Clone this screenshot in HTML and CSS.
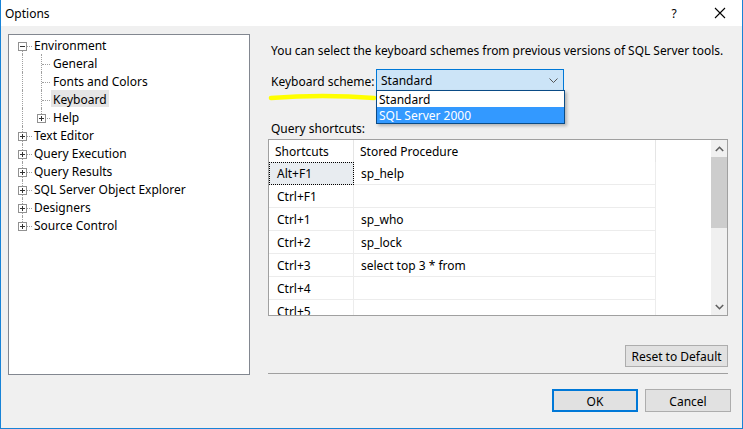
FILE: index.html
```html
<!DOCTYPE html>
<html>
<head>
<meta charset="utf-8">
<title>Options</title>
<link rel="stylesheet" href="styles.css">
</head>
<body>
<div class="window">
  <div class="titlebar">
    <span class="title">Options</span>
    <span class="tb-help">?</span>
    <span class="tb-close"><svg width="12" height="12" viewBox="0 0 12 12"><path d="M1 1 L11 11 M11 1 L1 11" stroke="#000" stroke-width="1.1" fill="none"/></svg></span>
  </div>
  <div class="main">
    <div class="tree">
      <div class="node first-top"><i class="v"></i><i class="h"></i><i class="exp minus"></i><span class="lbl">Environment</span></div>
      <div class="node child"><i class="v"></i><i class="cv"></i><i class="ch"></i><span class="lbl">General</span></div>
      <div class="node child"><i class="v"></i><i class="cv"></i><i class="ch"></i><span class="lbl">Fonts and Colors</span></div>
      <div class="node child"><i class="v"></i><i class="cv"></i><i class="ch"></i><span class="lbl selected">Keyboard</span></div>
      <div class="node child last-child"><i class="v"></i><i class="cv"></i><i class="ch short"></i><i class="exp plus cexp"></i><span class="lbl">Help</span></div>
      <div class="node"><i class="v"></i><i class="h"></i><i class="exp plus"></i><span class="lbl">Text Editor</span></div>
      <div class="node"><i class="v"></i><i class="h"></i><i class="exp plus"></i><span class="lbl">Query Execution</span></div>
      <div class="node"><i class="v"></i><i class="h"></i><i class="exp plus"></i><span class="lbl">Query Results</span></div>
      <div class="node"><i class="v"></i><i class="h"></i><i class="exp plus"></i><span class="lbl">SQL Server Object Explorer</span></div>
      <div class="node"><i class="v"></i><i class="h"></i><i class="exp plus"></i><span class="lbl">Designers</span></div>
      <div class="node last-top"><i class="v"></i><i class="h"></i><i class="exp plus"></i><span class="lbl">Source Control</span></div>
    </div>
    <div class="panel">
      <p class="intro">You can select the keyboard schemes from previous versions of SQL Server tools.</p>
      <div class="scheme-row">
        <span class="scheme-label">Keyboard scheme:</span>
        <div class="combo">
          <span>Standard</span>
          <svg class="chev" width="9" height="5" viewBox="0 0 9 5"><path d="M0.5 0.5 L4.5 4.5 L8.5 0.5" stroke="#555" fill="none"/></svg>
          <div class="dropdown">
            <div class="opt">Standard</div>
            <div class="opt active">SQL Server 2000</div>
          </div>
        </div>
        <svg class="marker" width="110" height="10" viewBox="0 0 110 10"><path d="M3 6 Q 55 2 106 6" stroke="#ffff00" stroke-width="4.5" stroke-linecap="round" fill="none"/></svg>
      </div>
      <p class="qs-label">Query shortcuts:</p>
      <div class="grid">
        <div class="table">
          <div class="hdr c1">Shortcuts</div><div class="hdr c2">Stored Procedure</div>
          <div class="cell c1 focus">Alt+F1</div><div class="cell c2">sp_help</div>
          <div class="cell c1">Ctrl+F1</div><div class="cell c2"></div>
          <div class="cell c1">Ctrl+1</div><div class="cell c2">sp_who</div>
          <div class="cell c1">Ctrl+2</div><div class="cell c2">sp_lock</div>
          <div class="cell c1">Ctrl+3</div><div class="cell c2">select top 3 * from</div>
          <div class="cell c1">Ctrl+4</div><div class="cell c2"></div>
          <div class="cell c1">Ctrl+5</div><div class="cell c2"></div>
        </div>
        <div class="scrollbar">
          <div class="arrow"><svg width="9" height="6" viewBox="0 0 9 6"><path d="M0.8 5 L4.5 1.3 L8.2 5" stroke="#606060" stroke-width="1.6" fill="none"/></svg></div>
          <div class="thumb"></div>
          <div class="track"></div>
          <div class="arrow"><svg width="9" height="6" viewBox="0 0 9 6"><path d="M0.8 1 L4.5 4.7 L8.2 1" stroke="#606060" stroke-width="1.6" fill="none"/></svg></div>
        </div>
      </div>
      <div class="reset-row"><button class="btn reset">Reset to Default</button></div>
      <div class="sep"></div>
    </div>
  </div>
  <div class="footer">
    <button class="btn ok">OK</button>
    <button class="btn cancel">Cancel</button>
  </div>
</div>
</body>
</html>
```

FILE: styles.css
```css
* { box-sizing: border-box; }
html, body { margin: 0; padding: 0; }
body {
  width: 743px;
  height: 429px;
  overflow: hidden;
  font-family: "Noto Sans", "Open Sans", sans-serif;
  font-size: 12px;
  color: #000;
  background: #f0f0f0;
}
.window {
  width: 743px;
  height: 429px;
  border: 1px solid #1883d7;
  border-top: none;
  background: #f0f0f0;
  display: flex;
  flex-direction: column;
}
.titlebar {
  height: 26px;
  background: #fff;
  display: flex;
  align-items: center;
  padding-left: 4px;
  flex-shrink: 0;
}
.title { flex: 1; font-size: 12px; }
.tb-help { width: 20px; text-align: center; margin-right: 30px; font-size: 12px; }
.tb-close { width: 12px; height: 12px; margin-right: 16px; display: flex; }

.main {
  display: flex;
  padding: 8px 14px 0 7px;
  gap: 18px;
}
.tree {
  width: 242px;
  height: 341px;
  border: 1px solid #828790;
  background: #fff;
  padding-top: 1px;
  flex-shrink: 0;
}
.node {
  position: relative;
  height: 18px;
  line-height: 18px;
  padding-left: 23px;
  white-space: nowrap;
}
.node.child { padding-left: 42px; }
.lbl { display: inline-block; padding: 1px 2px 0; height: 17px; line-height: 17px; vertical-align: top; }
.lbl.selected { background: #e5e5e5; }
.node i { position: absolute; display: block; }
.v { left: 13px; top: 0; bottom: 0; border-left: 1px dotted #a0a0a0; }
.first-top .v { top: 15px; }
.last-top .v { bottom: auto; height: 6px; }
.h { left: 18px; top: 10px; width: 5px; border-top: 1px dotted #a0a0a0; }
.cv { left: 32px; top: 0; bottom: 0; border-left: 1px dotted #a0a0a0; }
.last-child .cv { bottom: auto; height: 6px; }
.ch { left: 33px; top: 10px; width: 8px; border-top: 1px dotted #a0a0a0; }
.exp {
  left: 9px; top: 6px;
  width: 9px; height: 9px;
  border: 1px solid #919191;
  background: #fff;
}
.exp.cexp { left: 28px; }
.exp::before {
  content: "";
  position: absolute;
  left: 1px; top: 3px;
  width: 5px; height: 1px;
  background: #333;
}
.exp.plus::after {
  content: "";
  position: absolute;
  left: 3px; top: 1px;
  width: 1px; height: 5px;
  background: #333;
}

.panel {
  width: 460px;
  display: flex;
  flex-direction: column;
}
.intro { margin: 9px 0 0 3px; height: 16px; line-height: 16px; white-space: nowrap; font-size: 11.95px; }
.scheme-row {
  position: relative;
  display: flex;
  align-items: center;
  margin-top: 10px;
  height: 22px;
}
.scheme-label { width: 108px; padding: 2px 0 0 3px; }
.combo {
  position: relative;
  width: 188px;
  height: 22px;
  border: 1px solid #0078d7;
  background: #cce4f7;
  display: flex;
  align-items: center;
  padding: 1px 0 0 4px;
}
.combo span { flex: 1; }
.chev { margin: 0 5px 1px 0; }
.dropdown {
  position: absolute;
  left: -1px; top: 20px;
  width: 189px;
  border: 1px solid #0a4b86;
  background: #fff;
  box-shadow: 2px 2px 3px rgba(0,0,0,0.25);
  z-index: 2;
}
.opt { height: 16px; line-height: 17px; padding-left: 2px; }
.opt.active { background: #3399ff; color: #fff; }
.marker { position: absolute; left: 0; top: 23px; }
.qs-label { margin: 30px 0 0 3px; height: 16px; line-height: 16px; }
.grid {
  margin-top: 2px;
  height: 177px;
  border: 1px solid #a0a0a0;
  background: #fff;
  display: flex;
}
.table {
  flex: 1;
  display: grid;
  grid-template-columns: 85px 302px;
  grid-auto-rows: 23px;
  grid-template-rows: 22px;
  overflow: hidden;
  align-content: start;
}
.hdr {
  padding: 1px 0 0 6px;
  line-height: 21px;
  border-right: 1px solid #e5e5e5;
}
.cell {
  padding-top: 1px;
  line-height: 21px;
  border-bottom: 1px solid #ececec;
  border-right: 1px solid #ececec;
}
.cell.c1 { padding-left: 8px; }
.cell.c2 { padding-left: 7px; }
.cell.focus { background: #e8ecf0; outline: 1px dotted #000; outline-offset: -1px; }
.scrollbar {
  width: 16px;
  background: #f0f0f0;
  display: flex;
  flex-direction: column;
}
.arrow { height: 17px; display: flex; align-items: center; justify-content: center; }
.thumb { height: 71px; background: #cdcdcd; }
.track { flex: 1; }
.reset-row { display: flex; justify-content: flex-end; margin-top: 29px; }
.btn {
  font-family: inherit;
  font-size: 12px;
  color: #000;
  background: #e1e1e1;
  border: 1px solid #adadad;
  padding: 1px 0 0;
  margin: 0;
}
.reset { width: 103px; height: 22px; margin-right: 0; }
.sep { margin-top: 6px; height: 1px; background: #a0a0a0; }
.footer {
  display: flex;
  justify-content: flex-end;
  gap: 7px;
  padding-right: 11px;
  margin-top: 14px;
}
.ok, .cancel { width: 86px; height: 23px; }
.ok { border: 2px solid #0078d7; }
```
